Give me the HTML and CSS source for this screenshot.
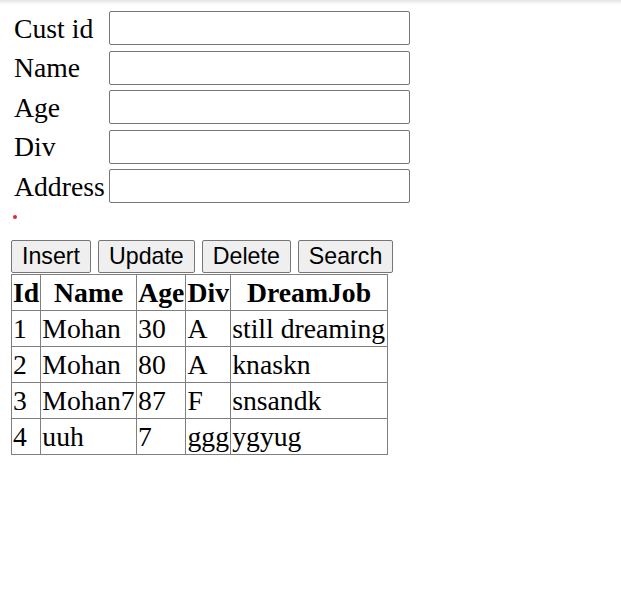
FILE: index.html
```html
<!DOCTYPE html>
<html>
<head>
<meta charset="utf-8">
<link rel="stylesheet" href="styles.css">
</head>
<body>
<form class="form">
  <label class="lbl" for="cid">Cust id</label><input class="inp" id="cid" type="text">
  <label class="lbl" for="nm">Name</label><input class="inp" id="nm" type="text">
  <label class="lbl" for="ag">Age</label><input class="inp" id="ag" type="text">
  <label class="lbl" for="dv">Div</label><input class="inp" id="dv" type="text">
  <label class="lbl" for="ad">Address</label><input class="inp" id="ad" type="text">
</form>
<div class="msg"><span class="dot"></span></div>
<div class="btns">
  <button class="btn" type="button">Insert</button>
  <button class="btn" type="button">Update</button>
  <button class="btn" type="button">Delete</button>
  <button class="btn" type="button">Search</button>
</div>
<table class="data">
  <tr><th>Id</th><th>Name</th><th>Age</th><th>Div</th><th>DreamJob</th></tr>
  <tr><td>1</td><td>Mohan</td><td>30</td><td>A</td><td>still dreaming</td></tr>
  <tr><td>2</td><td>Mohan</td><td>80</td><td>A</td><td>knaskn</td></tr>
  <tr><td>3</td><td>Mohan7</td><td>87</td><td>F</td><td>snsandk</td></tr>
  <tr><td>4</td><td>uuh</td><td>7</td><td>ggg</td><td>ygyug</td></tr>
</table>
</body>
</html>
```
FILE: styles.css
```css
html, body {
  margin: 0;
  padding: 0;
  background: #fff;
}
body {
  background: linear-gradient(#e4e4e4, #f6f6f6 3px, #fff 5px) no-repeat;
  background-size: 100% 6px;
  background-color: #fff;
  padding: 11px 0 0 11px;
  font-family: "Liberation Serif", "Times New Roman", serif;
  font-size: 27.7px;
  color: #000;
  min-height: 602px;
  box-sizing: border-box;
}
.form {
  display: grid;
  grid-template-columns: 98px 301px;
  row-gap: 5.5px;
  margin: 0;
}
.lbl {
  display: flex;
  align-items: center;
  padding: 1.5px 0 0 3px;
  line-height: 1;
}
.inp {
  box-sizing: border-box;
  width: 301px;
  height: 34px;
  margin: 0;
  border: 1px solid #767676;
  border-radius: 2px;
  background: #fff;
  font: inherit;
}
.msg {
  height: 37px;
  position: relative;
}
.dot {
  position: absolute;
  left: 2px;
  top: 12px;
  width: 4px;
  height: 4px;
  border-radius: 50%;
  background: #f0212b;
}
.btns {
  display: flex;
  gap: 7px;
  height: 34px;
}
.btn {
  box-sizing: border-box;
  height: 33px;
  margin: 0;
  padding: 1px 10px 0;
  border: 1px solid #767676;
  border-radius: 2px;
  background: #efefef;
  font-family: "Liberation Sans", Arial, sans-serif;
  font-size: 23.2px;
  color: #000;
  line-height: 1;
}
.data {
  border-collapse: collapse;
  border: 1px solid #808080;
  width: 377px;
}
.data th, .data td {
  border: 1px solid #808080;
  padding: 0 1px;
  height: 36px;
  box-sizing: border-box;
  line-height: 31px;
  white-space: nowrap;
}
.data td { text-align: left; }
.data th { text-align: center; font-weight: bold; }
```
